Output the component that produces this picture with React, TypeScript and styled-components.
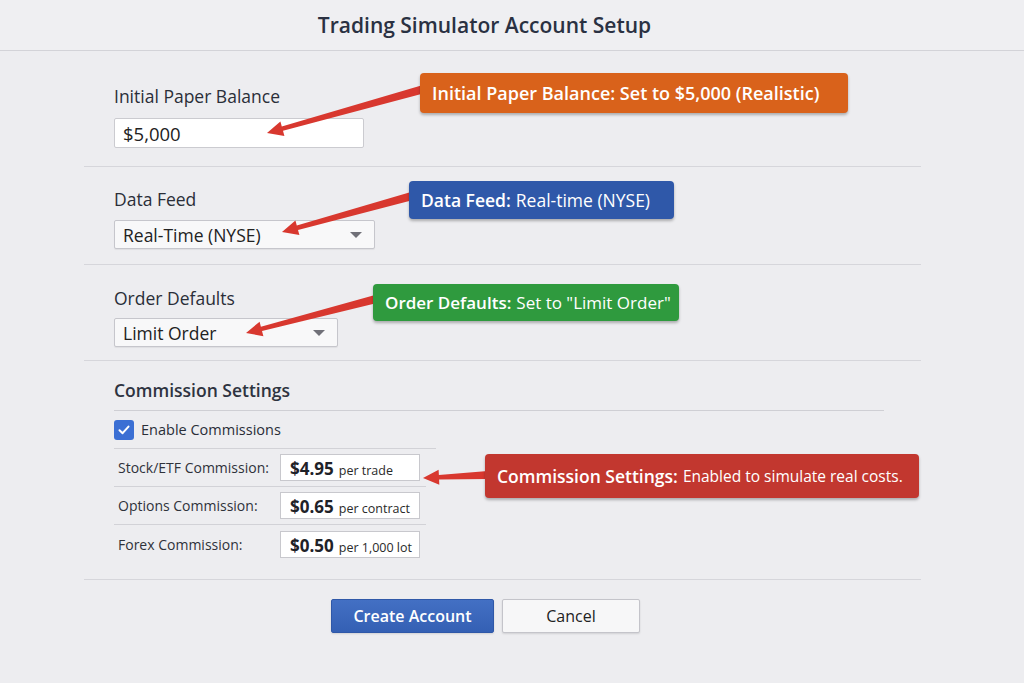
import React from "react";
import styled, { createGlobalStyle } from "styled-components";

const Global = createGlobalStyle`
  html, body { margin: 0; padding: 0; background: #ededf0; }
  body { font-family: "Open Sans", "Noto Sans", Arial, sans-serif; color: #2a2e38; }
  * { box-sizing: border-box; }
`;

const Page = styled.div`
  position: relative;
  width: 1024px;
  height: 683px;
  overflow: hidden;
  background: #ededf0;
`;

const Header = styled.header`
  height: 51px;
  display: flex;
  align-items: center;
  justify-content: center;
  padding-right: 55px;
  border-bottom: 1px solid #d3d3d8;
  background: #efeff2;
`;

const Title = styled.h1`
  margin: 0;
  font-size: 21px;
  font-weight: 600;
  color: #2a3142;
`;

const Content = styled.main`
  padding: 0 103px 0 84px;
`;

const Section = styled.section<{ $pt: number; $pb: number; $gap: number }>`
  display: flex;
  flex-direction: column;
  align-items: flex-start;
  gap: ${(p) => p.$gap}px;
  padding: ${(p) => p.$pt}px 0 ${(p) => p.$pb}px 30px;
  border-bottom: 1px solid #d6d6db;
`;

const Label = styled.div`
  font-size: 17.5px;
  line-height: 22px;
  font-weight: 500;
  color: #2a2e38;
`;

const TextInput = styled.div`
  width: 250px;
  height: 30px;
  background: #fff;
  border: 1px solid #cbcbd0;
  border-radius: 2px;
  display: flex;
  align-items: center;
  padding-left: 8px;
  font-size: 18.5px;
  color: #222;
`;

const Select = styled.div<{ $w: number }>`
  width: ${(p) => p.$w}px;
  height: 29px;
  background: #f8f8f9;
  border: 1px solid #c6c6cc;
  border-radius: 2px;
  display: flex;
  align-items: center;
  justify-content: space-between;
  padding: 0 12px 0 8px;
  font-size: 17.5px;
  color: #222;
  box-shadow: 0 1px 1px rgba(0, 0, 0, 0.06);
`;

const Caret = styled.span`
  width: 0;
  height: 0;
  border-left: 6px solid transparent;
  border-right: 6px solid transparent;
  border-top: 6px solid #707078;
`;

const CommissionSection = styled.section`
  padding: 18px 0 16px 30px;
  border-bottom: 1px solid #d6d6db;
`;

const SubHeading = styled.div`
  width: 770px;
  font-size: 17.5px;
  line-height: 22px;
  font-weight: 600;
  color: #2e3340;
  padding-bottom: 9px;
  border-bottom: 1px solid #cfcfd4;
`;

const CheckRow = styled.label`
  display: flex;
  align-items: center;
  gap: 7px;
  height: 38px;
  width: 322px;
  border-bottom: 1px solid #d2d2d7;
  font-size: 14.5px;
  color: #2a2e38;
`;

const Box = styled.span`
  width: 20px;
  height: 20px;
  border-radius: 3px;
  background: #3b6fd4;
  display: flex;
  align-items: center;
  justify-content: center;
`;

const FeeRow = styled.div<{ $last?: boolean }>`
  display: flex;
  align-items: center;
  width: 312px;
  height: 38px;
  padding-left: 4px;
  border-bottom: ${(p) => (p.$last ? "none" : "1px solid #d2d2d7")};
`;

const FeeLabel = styled.span`
  width: 162px;
  font-size: 14px;
  color: #2f323a;
`;

const FeeInput = styled.div`
  width: 140px;
  height: 27px;
  background: #fff;
  border: 1px solid #c8c8cd;
  display: flex;
  align-items: baseline;
  gap: 5px;
  padding: 2px 0 0 9px;
`;

const FeeValue = styled.span`
  font-size: 17px;
  font-weight: 700;
  color: #1f2228;
`;

const FeeUnit = styled.span`
  font-size: 12.5px;
  color: #2a2a2a;
`;

const Actions = styled.div`
  display: flex;
  gap: 8px;
  padding: 19px 0 0 247px;
`;

const Button = styled.button<{ $primary?: boolean }>`
  height: 34px;
  width: ${(p) => (p.$primary ? 163 : 138)}px;
  border-radius: 2px;
  font-family: inherit;
  font-size: 16px;
  font-weight: ${(p) => (p.$primary ? 600 : 400)};
  color: ${(p) => (p.$primary ? "#fff" : "#222")};
  background: ${(p) =>
    p.$primary ? "linear-gradient(#4370c4, #3460b4)" : "#f7f7f8"};
  border: 1px solid ${(p) => (p.$primary ? "#2f58a8" : "#c4c4ca")};
  box-shadow: 0 1px 2px rgba(0, 0, 0, 0.12);
`;

const Callout = styled.div<{ $bg: string; $x: number; $y: number; $w: number; $h: number; $fs: number; $fw?: number }>`
  position: absolute;
  left: ${(p) => p.$x}px;
  top: ${(p) => p.$y}px;
  width: ${(p) => p.$w}px;
  height: ${(p) => p.$h}px;
  background: ${(p) => p.$bg};
  border-radius: 4px;
  box-shadow: 0 2px 3px rgba(0, 0, 0, 0.28);
  display: flex;
  align-items: center;
  padding-left: 12px;
  color: #fff;
  font-size: ${(p) => p.$fs}px;
  font-weight: ${(p) => p.$fw ?? 400};
  white-space: nowrap;
  b { font-weight: 600; margin-right: 5px; }
`;

const Overlay = styled.svg`
  position: absolute;
  left: 0;
  top: 0;
  pointer-events: none;
`;

function arrowPoints(sx: number, sy: number, tx: number, ty: number) {
  const dx = tx - sx;
  const dy = ty - sy;
  const len = Math.hypot(dx, dy);
  const ux = dx / len;
  const uy = dy / len;
  const nx = -uy;
  const ny = ux;
  const head = 16;
  const hw = 7.5;
  const w0 = 4;
  const w1 = 2.2;
  const bx = tx - ux * head;
  const by = ty - uy * head;
  const pts = [
    [sx + nx * w0, sy + ny * w0],
    [bx + nx * w1, by + ny * w1],
    [bx + nx * hw, by + ny * hw],
    [tx, ty],
    [bx - nx * hw, by - ny * hw],
    [bx - nx * w1, by - ny * w1],
    [sx - nx * w0, sy - ny * w0],
  ];
  return pts.map((p) => `${p[0].toFixed(1)},${p[1].toFixed(1)}`).join(" ");
}

const arrows = [
  [424, 89, 267, 133],
  [412, 196, 282, 232],
  [376, 299, 246, 333],
  [488, 475, 423, 478],
];

const fees = [
  { label: "Stock/ETF Commission:", value: "$4.95", unit: "per trade" },
  { label: "Options Commission:", value: "$0.65", unit: "per contract" },
  { label: "Forex Commission:", value: "$0.50", unit: "per 1,000 lot" },
];

export default function App() {
  return (
    <Page>
      <Global />
      <Header>
        <Title>Trading Simulator Account Setup</Title>
      </Header>
      <Content>
        <Section $pt={34} $pb={18} $gap={11}>
          <Label>Initial Paper Balance</Label>
          <TextInput>$5,000</TextInput>
        </Section>
        <Section $pt={21} $pb={15} $gap={10}>
          <Label>Data Feed</Label>
          <Select $w={261}>
            Real-Time (NYSE)
            <Caret />
          </Select>
        </Section>
        <Section $pt={22} $pb={13} $gap={9}>
          <Label>Order Defaults</Label>
          <Select $w={224}>
            Limit Order
            <Caret />
          </Select>
        </Section>
        <CommissionSection>
          <SubHeading>Commission Settings</SubHeading>
          <CheckRow>
            <Box>
              <svg width="14" height="14" viewBox="0 0 14 14">
                <path d="M2.5 7.2 L5.6 10.2 L11.5 3.6" fill="none" stroke="#fff" strokeWidth="2" strokeLinecap="round" strokeLinejoin="round" />
              </svg>
            </Box>
            Enable Commissions
          </CheckRow>
          {fees.map((f, i) => (
            <FeeRow key={f.label} $last={i === fees.length - 1}>
              <FeeLabel>{f.label}</FeeLabel>
              <FeeInput>
                <FeeValue>{f.value}</FeeValue>
                <FeeUnit>{f.unit}</FeeUnit>
              </FeeInput>
            </FeeRow>
          ))}
        </CommissionSection>
        <Actions>
          <Button $primary>Create Account</Button>
          <Button>Cancel</Button>
        </Actions>
      </Content>

      <Overlay width={1024} height={683}>
        {arrows.map((a, i) => (
          <polygon key={i} points={arrowPoints(a[0], a[1], a[2], a[3])} fill="#d8382f" />
        ))}
      </Overlay>

      <Callout $bg="#d9621b" $x={420} $y={73} $w={428} $h={40} $fs={18} $fw={600}>
        Initial Paper Balance: Set to $5,000 (Realistic)
      </Callout>
      <Callout $bg="#2f58a9" $x={409} $y={181} $w={265} $h={38} $fs={17.5}>
        <b>Data Feed:</b>Real-time (NYSE)
      </Callout>
      <Callout $bg="#2f9a3e" $x={373} $y={284} $w={306} $h={37} $fs={17}>
        <b>Order Defaults:</b>Set to "Limit Order"
      </Callout>
      <Callout $bg="#c2372f" $x={485} $y={454} $w={434} $h={44} $fs={15.5}>
        <b style={{ fontSize: 17.5 }}>Commission Settings:</b>Enabled to simulate real costs.
      </Callout>
    </Page>
  );
}
